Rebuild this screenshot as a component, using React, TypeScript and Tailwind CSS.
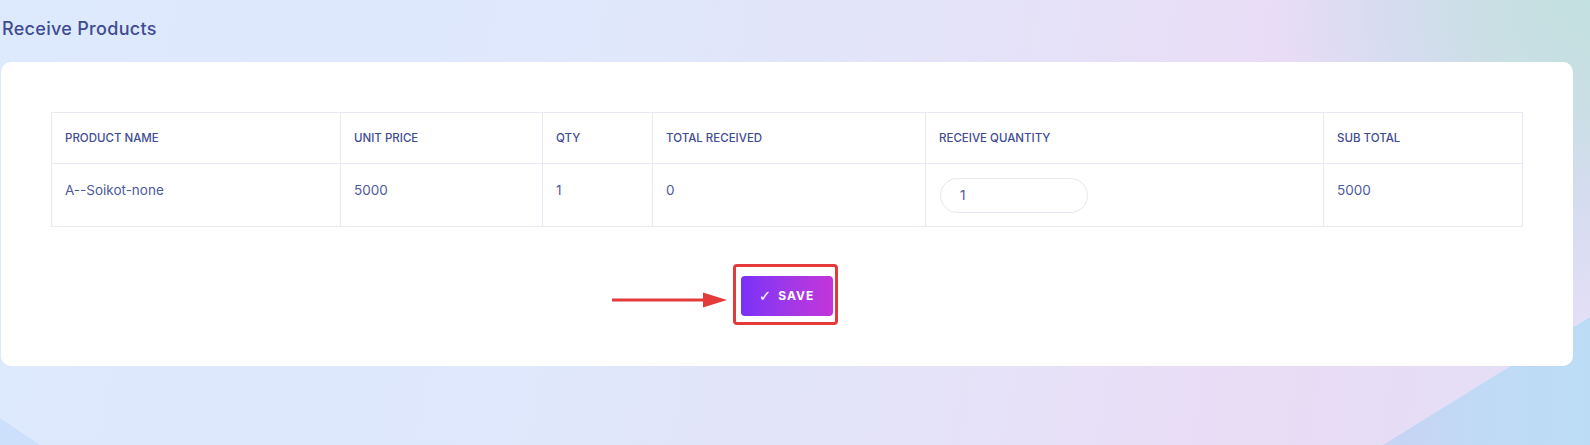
const COLS = [
  { label: "Product Name", w: "w-[289px]" },
  { label: "Unit Price", w: "w-[202px]" },
  { label: "Qty", w: "w-[110px]" },
  { label: "Total Received", w: "w-[273px]" },
  { label: "Receive Quantity", w: "w-[398px]" },
  { label: "Sub Total", w: "" },
];

const cell = "border border-[#e8e9f3] px-[13px] pt-[16px] align-top";

export default function App() {
  return (
    <div
      className="relative w-[1590px] h-[445px] overflow-hidden text-[#3f4c92] bg-[linear-gradient(100deg,#dde9fd_0%,#dfe8fc_35%,#e5e2f8_62%,#e9dcf5_80%,#e2dff6_100%)]"
      style={{ fontFamily: "Inter, 'Open Sans', sans-serif" }}
    >
      {/* background decoration */}
      <div className="absolute top-0 right-0 w-[320px] h-[320px] bg-[radial-gradient(circle_at_top_right,#c3e0e0_0%,#c9dfe4_22%,#d6dcf0_45%,transparent_70%)]" />
      <div className="absolute bottom-0 right-0 w-[207px] h-[128px] [clip-path:polygon(0_100%,100%_0,100%_100%)] bg-[linear-gradient(90deg,#c8d3f4_0%,#c0daf5_45%,#bcdcf6_100%)]" />
      <div className="absolute bottom-0 left-0 w-[40px] h-[27px] [clip-path:polygon(0_0,100%_100%,0_100%)] bg-[#cde0fb]" />

      <div className="relative pl-px pr-[17px]">
        <h1 className="h-[62px] pt-[18px] pl-px text-[18px] font-medium leading-[22px] tracking-[0.3px] text-[#3f4c92]">
          Receive Products
        </h1>

        <div className="bg-white rounded-[10px] px-[50px] pt-[50px] pb-[41px]">
          <table className="w-full border-collapse border border-[#e8e9f3] text-left">
            <thead>
              <tr className="h-[51px]">
                {COLS.map((c) => (
                  <th
                    key={c.label}
                    className={`${c.w} border border-[#e8e9f3] px-[13px] pt-[2px] align-middle text-[11.5px] font-medium uppercase text-[#3f4c92]`}
                  >
                    {c.label}
                  </th>
                ))}
              </tr>
            </thead>
            <tbody>
              <tr className="h-[63px] text-[13.5px] text-[#4e5a9c]">
                <td className={cell}>A--Soikot-none</td>
                <td className={cell}>5000</td>
                <td className={cell}>1</td>
                <td className={cell}>0</td>
                <td className="border border-[#e8e9f3] px-[14px] align-middle">
                  <div className="w-[148px] h-[35px] rounded-full border border-[#e6e8f0] pl-[19px] flex items-center text-[13.5px] text-[#4e5a9c]">
                    1
                  </div>
                </td>
                <td className={cell}>5000</td>
              </tr>
            </tbody>
          </table>

          <div className="flex justify-center mt-[37px]">
            <div className="relative -translate-x-[2px] border-[3px] border-[#e53a3a] rounded-[4px] pl-[5px] pr-[2px] pt-[9px] pb-[6px]">
              <button className="w-[92px] h-[40px] rounded-[4px] bg-gradient-to-r from-[#7b30f8] to-[#c334d8] text-white text-[12px] font-bold tracking-[1px] flex items-center justify-center gap-[6px]">
                <span style={{ fontFamily: "'DejaVu Sans', sans-serif" }} className="text-[15px] leading-none font-normal">
                  ✓
                </span>
                SAVE
              </button>
              {/* annotation arrow */}
              <svg
                className="absolute right-full top-[23px] mr-[8px]"
                width="116"
                height="20"
                viewBox="0 0 116 20"
              >
                <line x1="0" y1="10" x2="100" y2="10" stroke="#e53a3a" strokeWidth="3" />
                <path d="M91 2.5 L115 10 L91 17.5 Z" fill="#e53a3a" />
              </svg>
            </div>
          </div>
        </div>
      </div>
    </div>
  );
}
